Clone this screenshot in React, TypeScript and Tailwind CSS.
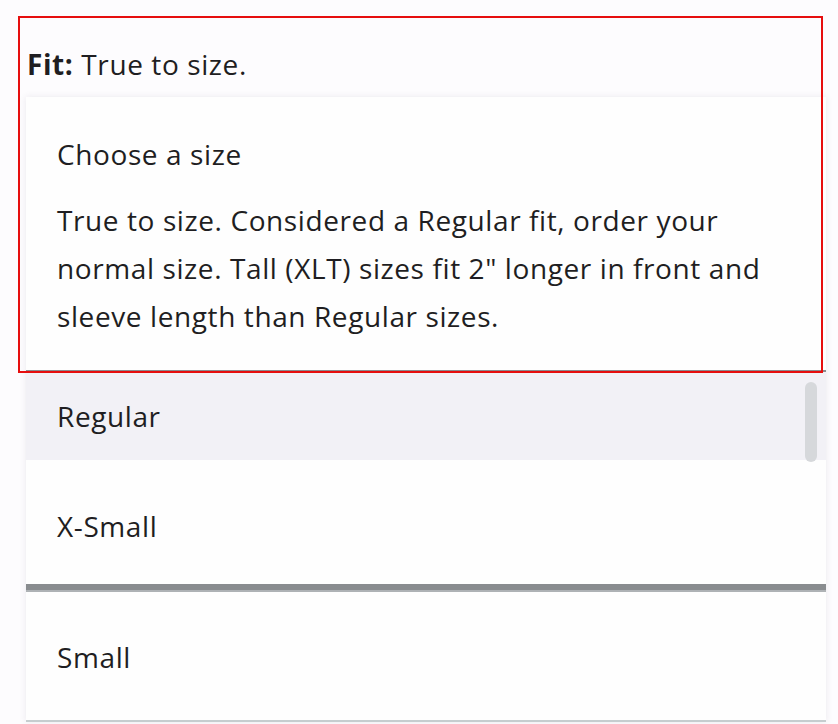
export default function App() {
  const rows = [
    { label: "Regular", cls: "h-[88px] pt-[20px] bg-[#f2f1f6]" },
    { label: "X-Small", cls: "h-[130px] pt-[42px] border-b-[6px] border-[#898c8f]" },
    { label: "Small", cls: "h-[132px] pt-[41px] border-t-2 border-b-2 border-t-[#aeb2b5] border-b-[#c6cdcf]" },
  ];

  return (
    <div className="relative h-[724px] overflow-hidden bg-[#fdfcfe] font-['Open_Sans',sans-serif] text-[28px] leading-[48px] tracking-[0.6px] text-[#1f1e22]">
      <div className="pl-[27px] pt-[40px]">
        <span className="font-bold">Fit:</span> True to size.
      </div>

      <div className="ml-[26px] mt-[9px] w-[800px] bg-[#fefefe] shadow-[0_0_7px_rgba(40,30,70,0.09)]">
        <div className="border-b-2 border-[#8a8d90] px-[31px] pb-[30px] pt-[33px]">
          <div>Choose a size</div>
          <p className="mt-[18px]">
            True to size. Considered a Regular fit, order your normal size. Tall (XLT) sizes fit 2" longer in front and
            sleeve length than Regular sizes.
          </p>
        </div>

        <div className="relative">
          {rows.map((r) => (
            <div key={r.label} className={`px-[31px] ${r.cls}`}>
              {r.label}
            </div>
          ))}
          <div className="absolute left-[779px] top-[10px] h-[80px] w-[12px] rounded-full bg-[#d6d8db]" />
        </div>
      </div>

      <div className="pointer-events-none absolute left-[18px] top-[16px] h-[357px] w-[805px] border-2 border-[#e60e0e]" />
    </div>
  );
}
